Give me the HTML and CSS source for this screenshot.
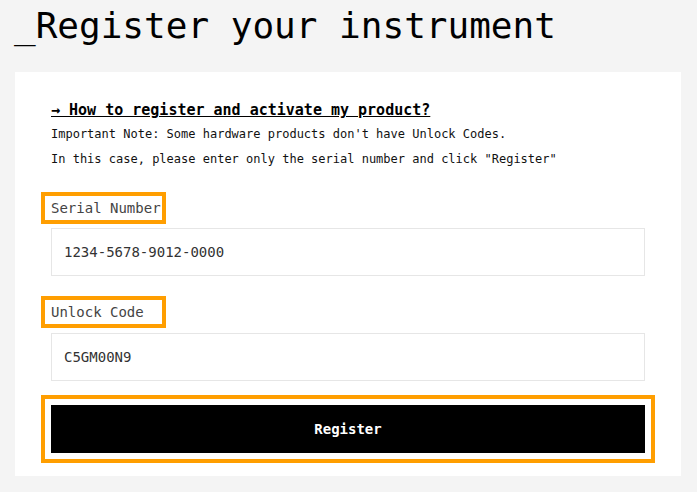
FILE: index.html
```html
<!DOCTYPE html>
<html lang="en">
<head>
    <meta charset="UTF-8">
    <meta name="viewport" content="width=device-width, initial-scale=1.0">
    <title>Register your instrument</title>
    <link rel="stylesheet" href="styles.css">
</head>
<body>
    <h1 class="page-title">_Register your instrument</h1>
    <main class="card">
        <a class="help-link" href="#">&rarr; How to register and activate my product?</a>
        <p class="note">Important Note: Some hardware products don't have Unlock Codes.</p>
        <p class="note">In this case, please enter only the serial number and click "Register"</p>

        <div class="field">
            <label class="field-label" for="serial">Serial Number</label>
            <input class="field-input" type="text" id="serial" value="1234-5678-9012-0000">
        </div>
        <div class="field">
            <label class="field-label" for="unlock">Unlock Code</label>
            <input class="field-input" type="text" id="unlock" value="C5GM00N9">
        </div>

        <button class="register-button">Register</button>
    </main>
</body>
</html>
```

FILE: styles.css
```css
body {
    margin: 0;
    padding: 0 16px 16px 15px;
    background-color: #f4f4f4;
    font-family: "DejaVu Sans Mono", "Liberation Mono", monospace;
    color: #111;
}

.page-title {
    margin: 0 0 20px -1px;
    font-size: 36px;
    font-weight: normal;
    line-height: 52px;
    color: #000;
}

.card {
    background-color: #fff;
    padding: 28px 36px 23px;
    display: flex;
    flex-direction: column;
    align-items: flex-start;
}

.help-link {
    font-size: 15px;
    font-weight: bold;
    line-height: 20px;
    color: #000;
    text-decoration: underline;
    margin-bottom: 2px;
}

.note {
    margin: 0;
    font-size: 12px;
    line-height: 25px;
    color: #111;
}

.field {
    display: flex;
    flex-direction: column;
    align-items: flex-start;
    align-self: stretch;
    margin-top: 20px;
}

.field-label {
    box-sizing: border-box;
    width: 125px;
    margin-left: -10px;
    padding: 4px 0 4px 6px;
    border: 4px solid #ff9e00;
    font-size: 14px;
    line-height: 16px;
    white-space: nowrap;
    color: #444;
}

.field-input {
    box-sizing: border-box;
    align-self: stretch;
    height: 48px;
    margin-top: 4px;
    padding: 0 12px;
    border: 1px solid #e6e6e6;
    font-family: inherit;
    font-size: 14px;
    color: #333;
    background-color: #fff;
}

.field + .field .field-input {
    margin-top: 5px;
}

.register-button {
    align-self: stretch;
    height: 48px;
    margin-top: 24px;
    border: none;
    background-color: #000;
    color: #fff;
    font-family: inherit;
    font-size: 14px;
    font-weight: bold;
    outline: 4px solid #ff9e00;
    outline-offset: 6px;
    cursor: pointer;
}
```
